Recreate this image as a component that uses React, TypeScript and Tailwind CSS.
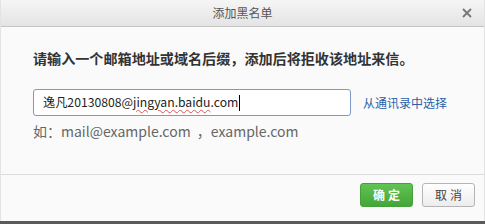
import React from "react";

export default function App() {
  const font = { fontFamily: '"Noto Sans CJK SC","Noto Sans",sans-serif' };
  return (
    <div className="w-[485px] h-[224px] bg-[#5a5a5a] flex flex-col overflow-hidden" style={font}>
      <div className="h-[221px] flex flex-col bg-[#fafafa] border-x border-[#e3e3e3]">
        <div className="h-[27px] shrink-0 flex items-center justify-center relative bg-gradient-to-b from-[#f5f5f5] to-[#e4e4e4] border-b border-[#c4c4c4]">
          <span className="text-[12px] text-[#555]">添加黑名单</span>
          <svg className="absolute right-[12px] top-[8px]" width="10" height="10" viewBox="0 0 10 10">
            <path d="M1 1 L9 9 M9 1 L1 9" stroke="#777" strokeWidth="1.8" />
          </svg>
        </div>
        <div className="flex-1 flex flex-col pl-[32px] pt-[21px]">
          <div className="text-[14.1px] leading-[20px] font-bold text-[#333]">
            请输入一个邮箱地址或域名后缀，添加后将拒收该地址来信。
          </div>
          <div className="flex items-center mt-[21px]">
            <div className="w-[318px] h-[27px] border border-[#7b9bc4] rounded-[3px] bg-white flex items-center pl-[9px] text-[12.2px] text-[#222]">
              <span>逸凡20130808@</span>
              <span className="underline decoration-wavy decoration-[#e05050] decoration-1 underline-offset-2">jingyan.baidu</span>
              <span>.com</span>
              <span className="w-[1px] h-[16px] bg-black ml-[1px]"></span>
            </div>
            <span className="ml-[12px] text-[12px] text-[#2b5ea8]">从通讯录中选择</span>
          </div>
          <div className="mt-[5px] text-[14px] leading-[20px] text-[#666]">
            如：mail@example.com &nbsp;，example.com
          </div>
        </div>
        <div className="h-[47px] shrink-0 border-t border-[#dcdcdc] flex items-start justify-end pt-[8px] pr-[9px] gap-[9px]">
          <button className="w-[53px] h-[24px] rounded-[3px] border border-[#44a038] bg-gradient-to-b from-[#60c452] to-[#45a539] text-white text-[12px] font-bold tracking-[3px] pl-[3px]">确定</button>
          <button className="w-[53px] h-[24px] rounded-[3px] border border-[#b5b5b5] bg-gradient-to-b from-[#ffffff] to-[#ececec] text-[#444] text-[12px] tracking-[3px] pl-[3px]">取消</button>
        </div>
      </div>
    </div>
  );
}
